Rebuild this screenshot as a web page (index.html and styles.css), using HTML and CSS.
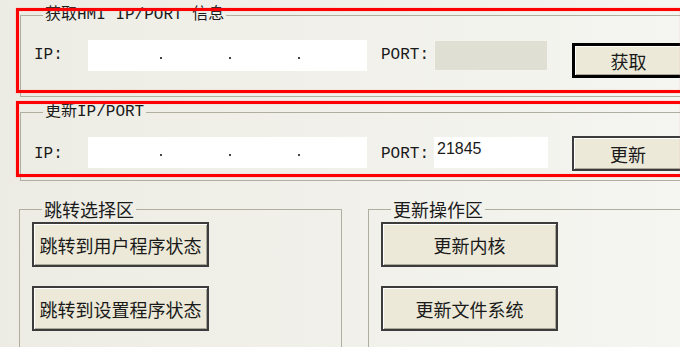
FILE: index.html
```html
<!DOCTYPE html>
<html lang="zh-CN">
  <head>
    <meta charset="UTF-8" />
    <meta name="viewport" content="width=device-width, initial-scale=1.0" />
    <title>HMI 更新工具</title>

    <link rel="stylesheet" href="styles.css">
  </head>
  <body>
    <div class="window">
      <div class="marked marked-first">
        <fieldset class="group group-top group-fetch">
          <legend>获取HMI IP/PORT 信息</legend>
          <div class="row">
            <span class="label">IP:</span>
            <div class="ip-field">
              <span class="octet"></span><span class="dot"></span>
              <span class="octet"></span><span class="dot"></span>
              <span class="octet"></span><span class="dot"></span>
              <span class="octet"></span>
            </div>
            <span class="label label-port">PORT:</span>
            <div class="port-field port-disabled"></div>
            <button class="btn btn-side btn-default">获取</button>
          </div>
        </fieldset>
      </div>

      <div class="marked marked-second">
        <fieldset class="group group-top group-set">
          <legend>更新IP/PORT</legend>
          <div class="row">
            <span class="label">IP:</span>
            <div class="ip-field">
              <span class="octet"></span><span class="dot"></span>
              <span class="octet"></span><span class="dot"></span>
              <span class="octet"></span><span class="dot"></span>
              <span class="octet"></span>
            </div>
            <span class="label label-port">PORT:</span>
            <div class="port-field">21845</div>
            <button class="btn btn-side btn-update">更新</button>
          </div>
        </fieldset>
      </div>

      <div class="bottom">
        <fieldset class="group group-bottom group-jump">
          <legend>跳转选择区</legend>
          <div class="btn-stack">
            <button class="btn btn-big">跳转到用户程序状态</button>
            <button class="btn btn-big">跳转到设置程序状态</button>
          </div>
        </fieldset>
        <fieldset class="group group-bottom group-ops">
          <legend>更新操作区</legend>
          <div class="btn-stack">
            <button class="btn btn-big">更新内核</button>
            <button class="btn btn-big">更新文件系统</button>
          </div>
        </fieldset>
      </div>
    </div>
  </body>
</html>
```

FILE: styles.css
```css
body {
  margin: 0;
  padding: 0;
  font-family: "Noto Sans CJK SC", sans-serif;
  color: #1a1a1a;
  background: #f0efe9;
  overflow: hidden;
}

.window {
  position: relative;
  width: 680px;
  height: 347px;
  overflow: hidden;
  box-sizing: border-box;
  padding-top: 7px;
  background: linear-gradient(to right, #edece4, #f5f5f1);
}

/* red highlight drawn over the two top groups; it runs off the right edge */
.marked {
  position: relative;
  margin-left: 20px;
}

.marked::after {
  content: "";
  position: absolute;
  left: -4px;
  right: 0;
  border: 3px solid #ff0000;
  border-right: none;
  box-shadow: 0 0 1px #ff8080, inset 0 0 1px #ff8080;
  pointer-events: none;
}

.marked-first::after {
  top: 1px;
  bottom: 4px;
}

.marked-second {
  margin-top: 7px;
}

.marked-second::after {
  top: -3px;
  bottom: 4px;
}

.group {
  margin: 0;
  min-inline-size: 0;
  border: 1px solid #b0ae9f;
}

.group legend {
  padding: 0 2px;
}

.group-top {
  border-right: none;
}

.group-top legend {
  margin-left: 9px;
  font-family: "Liberation Mono", "Noto Sans CJK SC", monospace;
  font-size: 16px;
  line-height: 16px;
}

.group-fetch {
  padding: 17px 0 18px 13px;
}

.group-set {
  padding: 17px 0 9px 13px;
}

.row {
  display: flex;
  align-items: flex-start;
}

.label {
  font-family: "Liberation Mono", monospace;
  font-size: 16px;
  line-height: 31px;
  width: 54px;
  flex: none;
}

.label-port {
  width: 53px;
  margin-left: 14px;
}

.group-set .label {
  padding-top: 2px;
}

.ip-field {
  display: flex;
  flex: none;
  width: 279px;
  height: 31px;
  padding-left: 5px;
  box-sizing: border-box;
  background: #fff;
}

.octet {
  width: 68px;
}

.dot {
  width: 2px;
  height: 2px;
  margin-top: 17px;
  background: #444;
}

.port-field {
  flex: none;
  width: 114px;
  height: 31px;
  box-sizing: border-box;
  padding: 3px 0 0 3px;
  background: #fff;
  font-family: "Liberation Sans", sans-serif;
  font-size: 16px;
  line-height: 18px;
}

.port-disabled {
  background: #e0dfd4;
  border: 1px solid #f4f3ee;
}

.btn {
  padding: 0;
  font-family: "Noto Sans CJK SC", sans-serif;
  font-size: 18px;
  color: #1a1a1a;
  background: #ece9d8;
  border: 2px solid #3c3c3c;
  box-shadow: inset 1px 1px #ffffff, inset -1px -1px #aca899;
  cursor: pointer;
}

.btn-side {
  flex: 0 0 110px;
  height: 35px;
  margin-left: 24px;
  border-right: none;
}

.btn-default {
  margin-top: 3px;
  border: 3px solid #000;
  border-right: none;
}

.btn-update {
  margin-top: -1px;
}

.bottom {
  display: flex;
  gap: 26px;
  margin: 19px 0 0 19px;
}

.group-bottom {
  padding: 4px 0 40px 12px;
}

.group-bottom legend {
  margin-left: 10px;
  font-size: 18px;
  line-height: 18px;
}

.group-jump {
  flex: 0 0 323px;
  box-sizing: border-box;
}

.group-ops {
  flex: 1;
  border-right: none;
}

.btn-stack {
  display: flex;
  flex-direction: column;
  gap: 19px;
}

.btn-big {
  width: 177px;
  height: 45px;
}
```
